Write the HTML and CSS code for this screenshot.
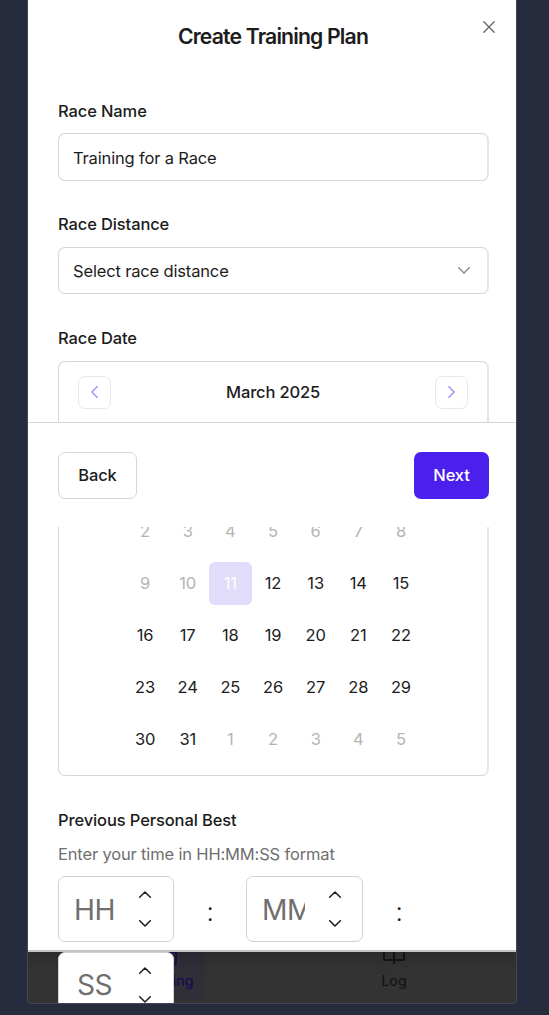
FILE: index.html
```
<!DOCTYPE html>
<html lang="en">
<head>
<meta charset="utf-8">
<title>Create Training Plan</title>
<link rel="stylesheet" href="styles.css">
</head>
<body>
<main class="frame">
  <nav class="tabbar">
    <div class="tab tab-active">
      <svg class="tab-icon" viewBox="0 0 24 24"><rect x="2" y="4" width="20" height="18" rx="2"/><path d="M16 2v4M8 2v4M2 10h20"/></svg>
      <span>Training</span>
    </div>
    <div class="tab">
      <svg class="tab-icon" viewBox="0 0 24 24"><path d="M12 7v14M3 18a1 1 0 0 1-1-1V4a1 1 0 0 1 1-1h5a4 4 0 0 1 4 4 4 4 0 0 1 4-4h5a1 1 0 0 1 1 1v13a1 1 0 0 1-1 1z"/></svg>
      <span>Log</span>
    </div>
  </nav>
  <section class="dialog">
    <h1 class="title">Create Training Plan</h1>
    <svg class="close" viewBox="0 0 12 12"><path d="M.8.8l10.4 10.4M11.2.8L.8 11.2"/></svg>

    <div class="field field-name">
      <div class="label">Race Name</div>
      <div class="control">Training for a Race</div>
    </div>
    <div class="field">
      <div class="label">Race Distance</div>
      <div class="control"><span>Select race distance</span><svg class="caret" viewBox="0 0 12 7"><path d="M.7.7L6 6 11.3.7"/></svg></div>
    </div>
    <div class="field">
      <div class="label">Race Date</div>
      <div class="calendar">
        <div class="month">
          <div class="month-btn"><svg viewBox="0 0 7 12"><path d="M6.1.8L.9 6l5.2 5.2"/></svg></div>
          <span class="month-name">March 2025</span>
          <div class="month-btn"><svg viewBox="0 0 7 12"><path d="M.9.8L6.1 6 .9 11.2"/></svg></div>
        </div>
        <div class="days">
          <span class="muted">2</span><span class="muted">3</span><span class="muted">4</span><span class="muted">5</span><span class="muted">6</span><span class="muted">7</span><span class="muted">8</span>
          <span class="muted">9</span><span class="muted">10</span><span class="selected">11</span><span>12</span><span>13</span><span>14</span><span>15</span>
          <span>16</span><span>17</span><span>18</span><span>19</span><span>20</span><span>21</span><span>22</span>
          <span>23</span><span>24</span><span>25</span><span>26</span><span>27</span><span>28</span><span>29</span>
          <span>30</span><span>31</span><span class="muted">1</span><span class="muted">2</span><span class="muted">3</span><span class="muted">4</span><span class="muted">5</span>
        </div>
      </div>
    </div>
    <div class="field">
      <div class="label label-best">Previous Personal Best</div>
      <div class="hint">Enter your time in HH:MM:SS format</div>
      <div class="time">
        <div class="unit"><span class="ph">HH</span><span class="steps"><svg viewBox="0 0 12 7"><path d="M.7 6.3L6 1l5.3 5.3"/></svg><svg viewBox="0 0 12 7"><path d="M.7.7L6 6 11.3.7"/></svg></span></div>
        <div class="colon">:</div>
        <div class="unit unit-min"><span class="ph">MM</span><span class="steps"><svg viewBox="0 0 12 7"><path d="M.7 6.3L6 1l5.3 5.3"/></svg><svg viewBox="0 0 12 7"><path d="M.7.7L6 6 11.3.7"/></svg></span></div>
        <div class="colon">:</div>
        <div class="unit unit-sec"><span class="ph">SS</span><span class="steps"><svg viewBox="0 0 12 7"><path d="M.7 6.3L6 1l5.3 5.3"/></svg><svg viewBox="0 0 12 7"><path d="M.7.7L6 6 11.3.7"/></svg></span></div>
      </div>
    </div>

    <footer class="actions">
      <div class="btn btn-back">Back</div>
      <div class="btn btn-next">Next</div>
    </footer>
  </section>
</main>
</body>
</html>
```
FILE: styles.css
```
* { box-sizing: border-box; }

body {
  margin: 0;
  height: 1015px;
  overflow: hidden;
  background: #262b3e;
  font-family: Inter, "Liberation Sans", sans-serif;
  font-size: 16.5px;
  letter-spacing: -.16px;
  line-height: 24px;
  color: #1c1c1c;
}

svg {
  display: block;
  fill: none;
  stroke: currentColor;
  stroke-linecap: round;
  stroke-linejoin: round;
}

.frame {
  position: relative;
  width: 490px;
  height: 1004px;
  margin-left: 27px;
  overflow: hidden;
  background: #333;
  border: 1px solid #414859;
  border-top: 0;
  border-radius: 0 0 4px 4px;
}

.dialog {
  position: relative;
  width: 488px;
  height: 952px;
  padding: 22px 27px 0 30px;
  background: #fff;
  border-bottom: 2px solid #c4c4c4;
  box-shadow: -1px 0 0 #aeb0b7, 0 5px 16px rgba(0, 0, 0, .2);
}

.title {
  margin: 0 1px 49px 0;
  font-size: 21.2px;
  line-height: 28px;
  font-weight: 600;
  letter-spacing: -.83px;
  text-align: center;
}

.close {
  position: absolute;
  top: 21px;
  right: 21.5px;
  width: 12px;
  height: 12px;
  color: #666;
  stroke-width: 1.3;
}

.field { margin-bottom: 32px; }
.label { height: 35px; font-weight: 500; letter-spacing: -.12px; }
.label-best { height: 34px; }
.field-name { margin-bottom: 31px; }
.field-name .label { height: 34px; }
.field-name .control { height: 48px; padding-top: 2px; }

.control {
  display: flex;
  align-items: center;
  justify-content: space-between;
  height: 47px;
  padding: 0 17px 0 14px;
  border: 1px solid #d6d6d6;
  border-right: 2px solid #e6e6e6;
  border-radius: 7px;
}
.caret { width: 12px; height: 7px; color: #888; stroke-width: 1.4; }

.calendar {
  height: 415px;
  padding: 14px 19px 0 19px;
  border: 1px solid #d6d6d6;
  border-right: 2px solid #e6e6e6;
  border-radius: 7px;
}
.month {
  display: flex;
  align-items: center;
  justify-content: space-between;
  font-weight: 500;
}
.month-name { padding-bottom: 2px; }
.month-btn {
  display: grid;
  place-items: center;
  width: 33px;
  height: 33px;
  padding-bottom: 1px;
  border: 1px solid #e8e8e8;
  border-radius: 7px;
}
.month-btn svg { width: 7px; height: 12px; color: #a18dfa; stroke-width: 1.4; }

.days {
  display: grid;
  grid-template-columns: repeat(7, 42.66px);
  grid-auto-rows: 42.5px;
  row-gap: 9.5px;
  justify-content: center;
  margin-top: 101px;
}
.days span { display: grid; place-items: center; border-radius: 6px; }
.days .muted { color: #b4b4b4; }
.days .selected { background: #e1dcfa; color: #fff; }

.hint { height: 34px; color: #6f6f6f; }

.time {
  display: flex;
  flex-wrap: wrap;
  row-gap: 10px;
}
.unit {
  display: flex;
  justify-content: space-between;
  width: 116px;
  height: 66px;
  padding: 0 22px 0 15px;
  background: #fff;
  border: 1px solid #d2d2d2;
  border-radius: 7px;
}
.unit-min { width: 117px; padding-right: 21px; }
.unit-sec { padding-left: 18px; }
.ph {
  align-self: center;
  width: 43px;
  margin-top: 1px;
  overflow: hidden;
  font-size: 28.2px;
  line-height: 36px;
  letter-spacing: -.5px;
  color: #6f6f6f;
}
.unit-sec .ph { margin-top: -1px; }
.steps {
  display: flex;
  flex-direction: column;
  justify-content: space-between;
  padding: 14px 0;
}
.steps svg { width: 12px; height: 7px; stroke-width: 1.5; }
.colon {
  height: 66px;
  width: 72px;
  text-align: center;
  font-size: 26px;
  font-weight: 300;
  line-height: 72px;
}

/* Pinned action bar that floats over the scrolled calendar */
.actions {
  position: absolute;
  top: 422px;
  left: 0;
  right: 0;
  display: flex;
  justify-content: space-between;
  height: 105px;
  padding: 29px 27px 0 30px;
  background: #fff;
  border-top: 1px solid #d6d6d6;
}
.btn {
  display: grid;
  place-items: center;
  height: 47px;
  padding-bottom: 2px;
  border-radius: 7px;
  font-weight: 500;
}
.btn-back { width: 79px; border: 1px solid #d6d6d6; }
.btn-next { width: 75px; background: #4b20ed; color: #fff; }

/* Dimmed tab bar behind the dialog */
.tabbar {
  position: absolute;
  bottom: 3px;
  left: 0;
  display: flex;
  font-size: 14.2px;
  font-weight: 500;
  line-height: 18px;
  letter-spacing: 0;
  color: #151515;
}
.tab {
  display: flex;
  flex-direction: column;
  align-items: center;
  gap: 6px;
  width: 78px;
  height: 65px;
  padding-top: 7px;
  border-radius: 7px;
}
.tab-active { margin-left: 99px; background: #302f38; color: #170d50; }
.tab:last-child { margin-left: 150px; }
.tab-icon { width: 24px; height: 24px; stroke-width: 2; }
```
